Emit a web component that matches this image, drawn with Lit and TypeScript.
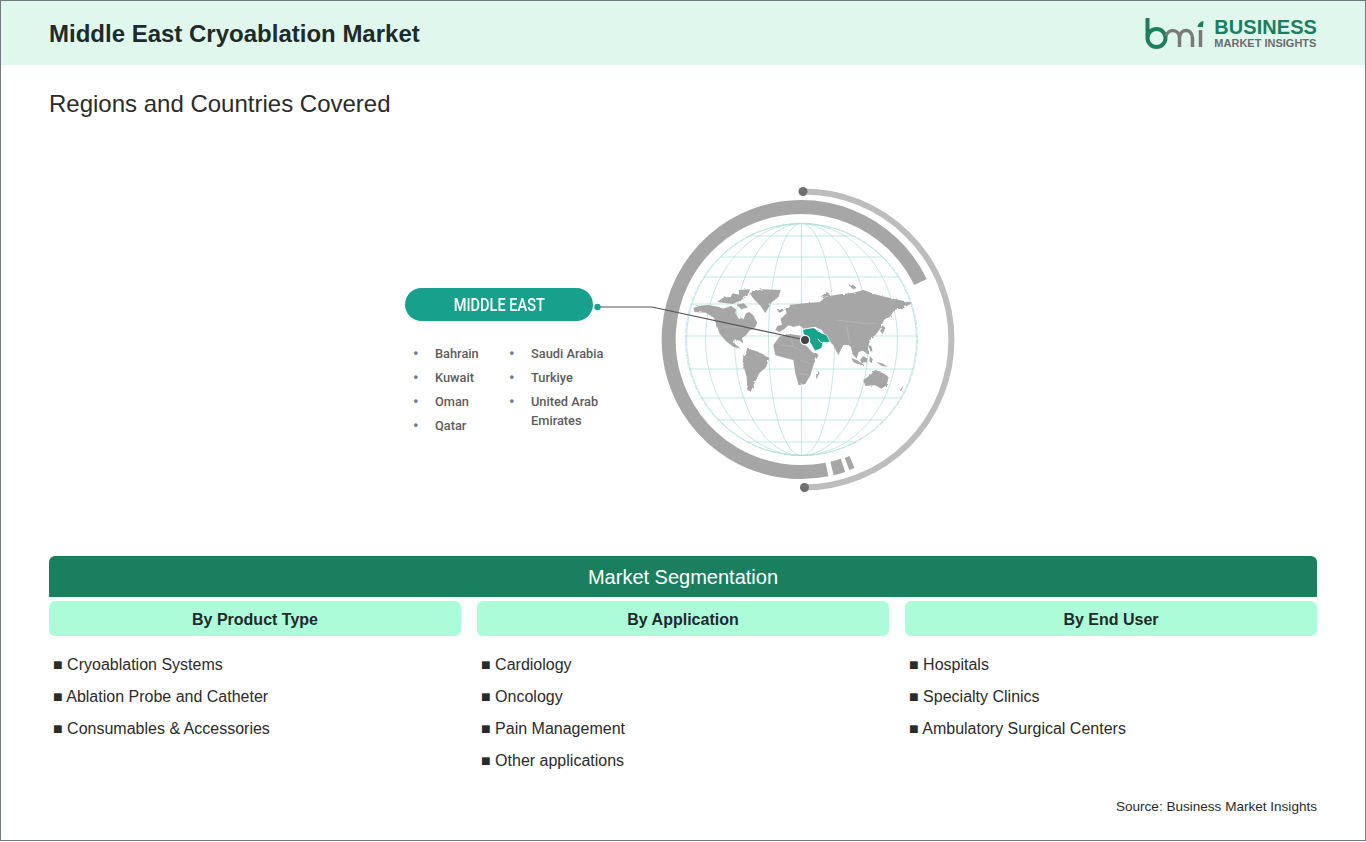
import { LitElement, css, html, svg } from 'lit';
import { customElement } from 'lit/decorators.js';

const CX = 801.5;
const CY = 339.5;
const R = 116;

// parallels and meridians of the globe
const parallels = [236, 257, 277, 304, 336, 369, 398, 420, 442];
const meridians = [115, 96, 67, 33];

// continents, traced at 3x from the map area, origin 690,280
const land = [
  // north america
  'M10 84 30 77 55 75 85 80 100 86 122 78 138 88 136 100 146 116 162 114 168 100 178 96 190 106 202 128 196 142 178 152 168 166 156 174 160 190 148 182 134 178 128 186 152 206 130 200 108 184 88 160 80 136 72 114 48 98 14 96Z',
  // greenland
  'M178 40 215 28 272 30 266 50 244 68 226 100 212 78 196 62Z',
  // arctic islands
  'M80 66 98 54 122 50 128 40 148 44 146 30 180 28 172 48 150 62 128 72 100 68Z',
  'M140 74 160 70 174 82 154 88Z',
  // south america
  'M160 226 175 206 200 214 238 234 228 262 208 280 194 308 182 335 172 330 170 290 158 250Z',
  // africa
  'M250 196 268 170 300 162 336 168 346 194 366 216 386 224 372 250 362 284 346 312 326 316 316 280 310 240 286 234 256 226Z',
  'M375 285 385 272 388 280 380 297Z',
  // eurasia
  'M256 150 262 138 276 134 272 116 290 100 286 86 302 74 345 70 390 66 406 50 440 44 490 38 520 30 560 44 600 54 666 68 642 84 612 90 600 110 582 120 574 142 556 166 544 172 534 200 534 222 518 212 506 216 500 236 490 225 480 195 460 195 445 226 430 196 415 180 395 150 375 140 340 146 332 136 310 140 296 136 282 148 268 156Z',
  // uk, iceland, arctic bits
  'M278 126 286 108 296 116 292 128Z',
  'M262 92 276 86 282 92 268 98Z',
  'M392 50 410 36 420 42 402 52Z',
  'M478 18 490 14 500 24 490 28Z',
  // japan, kamchatka
  'M570 152 582 138 586 144 578 162Z',
  'M594 82 608 72 612 92 600 108Z',
  // south east asia
  'M484 234 500 240 522 254 510 256 490 246Z',
  'M510 240 520 228 532 236 530 250 516 250Z',
  'M540 228 548 238 546 250 538 244Z',
  'M558 246 576 250 594 260 576 258Z',
  'M536 196 544 198 548 214 540 214Z',
  // australia, nz
  'M520 300 540 286 555 270 576 276 596 292 590 316 574 326 556 316 526 318Z',
  'M620 342 634 326 640 316 636 330Z',
];
const middleEast = 'M338 150 346 147 370 143 385 150 392 158 410 165 420 185 410 188 400 186 395 205 375 213 365 195 350 175 340 160Z';
// faint country borders over the land
const borders = 'M300 165 310 200 340 215M270 195 310 200M330 240 360 250M325 280 355 285M100 140 195 142M440 120 520 130 560 130M470 140 480 190';

@customElement('app-root')
class AppRoot extends LitElement {
  static styles = css`
    :host {
      display: block;
      font-family: 'Liberation Sans', Arial, sans-serif;
      color: #222;
    }
    .page {
      box-sizing: border-box;
      width: 1366px;
      height: 841px;
      border: 1px solid #6f7c7c;
      background: #fff;
    }
    .head {
      height: 64px;
      background: #e0f7ee;
      padding: 0 48px;
      display: flex;
      align-items: center;
      justify-content: space-between;
    }
    h1 {
      margin: 2px 0 0;
      font-size: 24px;
      font-weight: 700;
      color: #1f2a2a;
    }
    .logo {
      display: flex;
      align-items: center;
      gap: 9px;
    }
    .logo svg {
      display: block;
    }
    .logo-text {
      display: flex;
      flex-direction: column;
    }
    .logo-top {
      font-size: 20px;
      line-height: 20px;
      font-weight: 700;
      letter-spacing: 0.05px;
      color: #1a7f5f;
    }
    .logo-sub {
      font-size: 11px;
      line-height: 12px;
      font-weight: 700;
      color: #6d6d6d;
    }
    .body {
      padding: 0 48px;
    }
    h2 {
      margin: 0;
      padding-top: 22px;
      font-size: 24px;
      line-height: 34px;
      font-weight: 400;
      color: #2b2b2b;
    }
    .stage {
      position: relative;
      box-sizing: border-box;
      width: 560px;
      height: 315px;
      margin: 59px 0 61px 351px;
      padding: 108px 0 0 5px;
    }
    .stage svg {
      position: absolute;
      left: 0;
      top: 0;
    }
    .pill {
      width: 188px;
      height: 33px;
      border-radius: 17px;
      background: #17a08c;
      color: #fff;
      font-family: Roboto, sans-serif;
      font-size: 18px;
      font-weight: 500;
      line-height: 33px;
      text-align: center;
    }
    .pill span {
      display: inline-block;
      transform: scaleX(0.81);
    }
    .places {
      display: flex;
      margin-top: 23px;
      font-family: Roboto, sans-serif;
      font-size: 12.8px;
      font-weight: 500;
      color: #5c5c5c;
    }
    .places ul {
      list-style: none;
      margin: 0;
      padding: 0;
      flex: 0 0 96px;
    }
    .places ul + ul {
      flex: 0 0 110px;
    }
    .places li {
      display: flex;
      margin-bottom: 5px;
      line-height: 19px;
    }
    .places i {
      flex: 0 0 30px;
      font-style: normal;
      font-size: 16px;
      padding-left: 8px;
      box-sizing: border-box;
      color: #777;
    }
    .places span {
      flex: 1;
    }
    .band {
      height: 41px;
      border-radius: 6px 6px 0 0;
      background: #1a7f5f;
      color: #fff;
      font-size: 20px;
      line-height: 43px;
      text-align: center;
    }
    .cols {
      display: grid;
      grid-template-columns: repeat(3, 1fr);
      gap: 16px;
      margin-top: 4px;
    }
    .col-head {
      height: 35px;
      border-radius: 6px;
      background: #adfcd9;
      font-size: 16px;
      font-weight: 700;
      line-height: 37px;
      text-align: center;
      color: #1f2a2a;
    }
    .cols ul {
      list-style: none;
      margin: 13px 0 0;
      padding: 0 0 0 4px;
      font-size: 16px;
      line-height: 32px;
      color: #2b2b2b;
    }
    .source {
      margin-top: 20px;
      font-size: 13.55px;
      line-height: 20px;
      text-align: right;
      color: #2b2b2b;
    }
  `;

  renderDiagram() {
    return html`
      <svg width="560" height="315" viewBox="400 180 560 315" fill="none">
        <defs>
          <filter id="rough" x="-5%" y="-5%" width="110%" height="110%">
            <feTurbulence type="fractalNoise" baseFrequency="0.07" numOctaves="2" seed="4"></feTurbulence>
            <feDisplacementMap in="SourceGraphic" scale="8"></feDisplacementMap>
          </filter>
        </defs>
        <g stroke="#aadcd8" stroke-width="0.7">
          <circle cx=${CX} cy=${CY} r=${R} stroke-dasharray="5 1.5"></circle>
          <line x1=${CX} y1=${CY - R} x2=${CX} y2=${CY + R}></line>
          ${meridians.map(
            (rx) => svg`<ellipse cx=${CX} cy=${CY} rx=${rx} ry=${R}></ellipse>`
          )}
          ${parallels.map((y) => {
            const half = Math.sqrt(R * R - (y - CY) * (y - CY));
            return svg`<line x1=${CX - half} y1=${y} x2=${CX + half} y2=${y}></line>`;
          })}
        </g>
        <g transform="translate(690 280) scale(0.3333)">
          <g filter="url(#rough)">
            ${land.map((d) => svg`<path d=${d} fill="#a6a6a6"></path>`)}
          </g>
          <path d=${borders} stroke="#fff" stroke-opacity="0.35" stroke-width="1.5"></path>
          <path d=${middleEast} fill="#12a58a" stroke="#fff" stroke-width="2"></path>
          <path d="M384 176 C388 186 396 190 404 188" stroke="#fff" stroke-width="3"></path>
          <path d="M376 142 C378 148 382 154 388 156" stroke="#fff" stroke-width="3"></path>
        </g>
        <!-- thick ring and the two little blocks -->
        <g stroke="#a6a6a6" stroke-width="14">
          <path d="M920.5 282 A132.5 132.5 0 1 0 827 469.5"></path>
          <path d="M832 468.5 A132.5 132.5 0 0 0 843 465.3"></path>
          <path d="M847 464 A132.5 132.5 0 0 0 852 462" stroke-width="13"></path>
        </g>
        <path d="M803 191.5 A148 148 0 0 1 804 487.5" stroke="#bdbdbd" stroke-width="6"></path>
        <circle cx="803" cy="191.5" r="4.5" fill="#6f6f6f"></circle>
        <circle cx="804.5" cy="487.5" r="4.5" fill="#6f6f6f"></circle>
        <path d="M600 307 H652 L805 340" stroke="#555" stroke-width="1.2"></path>
        <circle cx="597.5" cy="307" r="3.2" fill="#17a08c"></circle>
        <circle cx="805" cy="340" r="4.6" fill="#444" stroke="#fff" stroke-width="1.2"></circle>
      </svg>
    `;
  }

  renderPlaces(list: string[]) {
    return html`<ul>${list.map((p) => html`<li><i>•</i><span>${p}</span></li>`)}</ul>`;
  }

  renderCol(title: string, items: string[]) {
    return html`
      <div>
        <div class="col-head">${title}</div>
        <ul>${items.map((t) => html`<li>■ ${t}</li>`)}</ul>
      </div>
    `;
  }

  render() {
    return html`
      <div class="page">
        <div class="head">
          <h1>Middle East Cryoablation Market</h1>
          <div class="logo">
            <svg width="60" height="34" viewBox="1146 16 60 34" fill="none">
              <path d="M1148.5 18 V38 A9 9 0 0 0 1166.5 38 A9 9 0 0 0 1148.5 38" stroke="#1a7f5f" stroke-width="4"></path>
              <path d="M1167 36 C1169 29 1180 28 1180.5 38 V47 M1180.5 38 C1181 28 1193 28 1193.5 38 V47" stroke="#7a7a7a" stroke-width="3.5"></path>
              <path d="M1201.5 30 V47" stroke="#7a7a7a" stroke-width="3.5"></path>
              <path d="M1198.5 27 C1199 23 1202 21.5 1204.5 21 L1204 27 Z" fill="#1a7f5f"></path>
            </svg>
            <div class="logo-text">
              <span class="logo-top">BUSINESS</span>
              <span class="logo-sub">MARKET INSIGHTS</span>
            </div>
          </div>
        </div>
        <div class="body">
          <h2>Regions and Countries Covered</h2>
          <div class="stage">
            ${this.renderDiagram()}
            <div class="pill"><span>MIDDLE EAST</span></div>
            <div class="places">
              ${this.renderPlaces(['Bahrain', 'Kuwait', 'Oman', 'Qatar'])}
              ${this.renderPlaces(['Saudi Arabia', 'Turkiye', 'United Arab Emirates'])}
            </div>
          </div>
          <div class="band">Market Segmentation</div>
          <div class="cols">
            ${this.renderCol('By Product Type', ['Cryoablation Systems', 'Ablation Probe and Catheter', 'Consumables & Accessories'])}
            ${this.renderCol('By Application', ['Cardiology', 'Oncology', 'Pain Management', 'Other applications'])}
            ${this.renderCol('By End User', ['Hospitals', 'Specialty Clinics', 'Ambulatory Surgical Centers'])}
          </div>
          <div class="source">Source: Business Market Insights</div>
        </div>
      </div>
    `;
  }
}

export default AppRoot;
